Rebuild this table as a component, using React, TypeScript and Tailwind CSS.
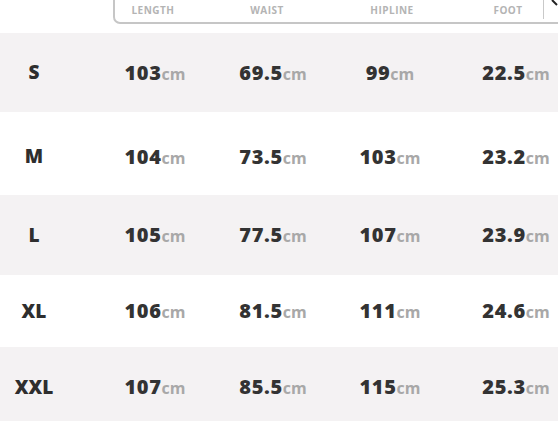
const rows = [
  { size: "S", v: ["103", "69.5", "99", "22.5"], h: "h-[79px]", bg: "bg-[#f4f2f3]" },
  { size: "M", v: ["104", "73.5", "103", "23.2"], h: "h-[83px] pt-[6px]", bg: "bg-white" },
  { size: "L", v: ["105", "77.5", "107", "23.9"], h: "h-[80px]", bg: "bg-[#f4f2f3]" },
  { size: "XL", v: ["106", "81.5", "111", "24.6"], h: "h-[72px]", bg: "bg-white" },
  { size: "XXL", v: ["107", "85.5", "115", "25.3"], h: "h-[80px]", bg: "bg-[#f4f2f3]" },
];

const widths = ["w-[174px]", "w-[62px]", "w-[172px]", "w-[80px]"];

const App = () => {
  return (
    <div className="w-[558px] h-[421px] overflow-hidden bg-white font-['Open_Sans',sans-serif] relative flex flex-col">
      {/* header */}
      <div className="h-[33px] shrink-0 flex items-start pl-[113px]">
        <div className="-mt-[12px] h-[36px] w-[470px] shrink-0 border-2 border-[#c6c6c6] rounded-[7px] flex items-start text-[10px] font-bold tracking-[0.05em] text-[#b4b4b4]">
          <div className="w-[76px] h-[29px] flex items-end justify-center pb-[1px]">LENGTH</div>
          <div className="w-[152px] h-[29px] flex items-end justify-center pb-[1px]">WAIST</div>
          <div className="w-[98px] h-[29px] flex items-end justify-center pb-[1px]">HIPLINE</div>
          <div className="w-[103px] h-[29px] flex items-end justify-center pb-[1px] pl-[32px] border-r-[1.5px] border-[#c9c9c9]">
            FOOT
          </div>
        </div>
      </div>
      <svg className="absolute right-0 top-0" width="8" height="6" viewBox="0 0 8 6">
        <path d="M2 0 L7 5" stroke="#222" strokeWidth="2" />
      </svg>

      {rows.map((r) => (
        <div key={r.size} className={`shrink-0 flex items-center ${r.h} ${r.bg}`}>
          <div className="w-[68px] flex justify-center text-[19px] font-extrabold text-[#2e2e2e]">
            {r.size}
          </div>
          {r.v.map((n, i) => (
            <div key={i} className={`${widths[i]} flex items-baseline justify-center whitespace-nowrap`}>
              <span className="text-[20px] font-extrabold text-[#333] tracking-[0.03em]">{n}</span>
              <span className="text-[16px] font-bold text-[#a8a8a8]">cm</span>
            </div>
          ))}
        </div>
      ))}
    </div>
  );
};

export default App;
